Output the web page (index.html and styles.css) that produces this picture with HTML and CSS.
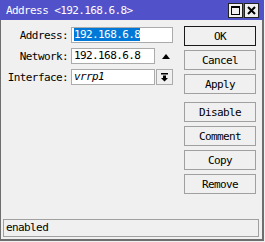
FILE: index.html
```
<!DOCTYPE html>
<html lang="en">
<head>
    <meta charset="UTF-8">
    <title>Address &lt;192.168.6.8&gt;</title>
    <link rel="stylesheet" href="styles.css">
</head>
<body>
    <div class="window">
        <!-- Title bar -->
        <div class="titlebar">
            <span class="title">Address &lt;192.168.6.8&gt;</span>
            <div class="title-buttons">
                <span class="tbtn">
                    <svg width="11" height="11" viewBox="0 0 11 11">
                        <rect x="1.5" y="1.5" width="8" height="8" fill="none" stroke="#000" stroke-width="1"/>
                        <rect x="1" y="1" width="9" height="2" fill="#000"/>
                    </svg>
                </span>
                <span class="tbtn">
                    <svg width="11" height="11" viewBox="0 0 11 11">
                        <path d="M2 2 L9 9 M9 2 L2 9" stroke="#000" stroke-width="2"/>
                    </svg>
                </span>
            </div>
        </div>

        <div class="frame">
            <div class="main">
                <!-- Fields -->
                <div class="fields">
                    <label class="field-label">Address:</label>
                    <div class="field-row">
                        <div class="input wide"><span class="selected">192.168.6.8</span></div>
                    </div>

                    <label class="field-label">Network:</label>
                    <div class="field-row">
                        <div class="input">192.168.6.8</div>
                        <span class="arrow-up"></span>
                    </div>

                    <label class="field-label">Interface:</label>
                    <div class="field-row">
                        <div class="input"><i>vrrp1</i></div>
                        <span class="dropdown">
                            <svg width="9" height="9" viewBox="0 0 9 9">
                                <rect x="1" y="0" width="7" height="1.5" fill="#000"/>
                                <path d="M3 2.5 H6 V5 H8 L4.5 8.5 L1 5 H3 Z" fill="#000"/>
                            </svg>
                        </span>
                    </div>
                </div>

                <!-- Buttons -->
                <div class="buttons">
                    <button class="btn default">OK</button>
                    <button class="btn">Cancel</button>
                    <button class="btn">Apply</button>
                    <button class="btn spaced">Disable</button>
                    <button class="btn">Comment</button>
                    <button class="btn">Copy</button>
                    <button class="btn">Remove</button>
                </div>
            </div>

            <div class="status">enabled</div>
        </div>
    </div>
</body>
</html>
```

FILE: styles.css
```
html {
    background: #f0f0f0;
}
body {
    margin: 0;
    padding: 0;
    font-family: "DejaVu Sans Mono", "Liberation Mono", monospace;
    font-size: 11px;
    letter-spacing: -0.6px;
    color: #000;
}
.window {
    width: 264px;
    height: 241px;
    display: flex;
    flex-direction: column;
    background: #f0f0f0;
}
.titlebar {
    height: 20px;
    background: #5151c9;
    display: flex;
    align-items: center;
    padding-left: 6px;
    flex-shrink: 0;
}
.title {
    color: #fff;
    flex: 1;
}
.title-buttons {
    display: flex;
    gap: 1px;
    margin-right: 5px;
}
.tbtn {
    width: 13px;
    height: 13px;
    border: 1px solid #222;
    background: #f0f0f0;
    display: flex;
    align-items: center;
    justify-content: center;
}
.frame {
    flex: 1;
    display: flex;
    flex-direction: column;
    border-left: 1px solid #6e6e6e;
    border-right: 2px solid #6e6e6e;
    border-bottom: 2px solid #6e6e6e;
    padding: 0 3px 2px 2px;
}
.main {
    flex: 1;
    display: flex;
}
.fields {
    display: grid;
    grid-template-columns: 65px auto;
    column-gap: 3px;
    row-gap: 5px;
    padding-top: 7px;
    align-content: start;
    align-items: center;
}
.field-label {
    text-align: right;
}
.field-row {
    display: flex;
    align-items: center;
    gap: 1px;
}
.input {
    width: 84px;
    height: 16px;
    box-sizing: border-box;
    border: 1px solid #ababab;
    background: #fff;
    padding-left: 2px;
    line-height: 14px;
    white-space: nowrap;
    overflow: hidden;
}
.input.wide {
    width: 102px;
}
.selected {
    background: #0078d7;
    color: #fff;
}
.arrow-up {
    width: 0;
    height: 0;
    margin-left: 6px;
    border-left: 4px solid transparent;
    border-right: 4px solid transparent;
    border-bottom: 5px solid #000;
}
.dropdown {
    width: 17px;
    height: 16px;
    box-sizing: border-box;
    border: 1px solid #ababab;
    background: #f0f0f0;
    display: flex;
    align-items: center;
    justify-content: center;
}
.buttons {
    margin-left: auto;
    margin-right: 3px;
    padding-top: 6px;
    display: flex;
    flex-direction: column;
    gap: 4px;
}
.btn {
    width: 72px;
    height: 20px;
    border: 1px solid #a0a0a0;
    background: #f0f0f0;
    font-family: inherit;
    font-size: inherit;
    letter-spacing: inherit;
    color: #000;
    padding: 0;
}
.btn.default {
    border-color: #1a1a1a;
}
.btn.spaced {
    margin-top: 4px;
}
.status {
    height: 18px;
    box-sizing: border-box;
    border: 1px solid #a0a0a0;
    padding-left: 2px;
    line-height: 16px;
}
```
